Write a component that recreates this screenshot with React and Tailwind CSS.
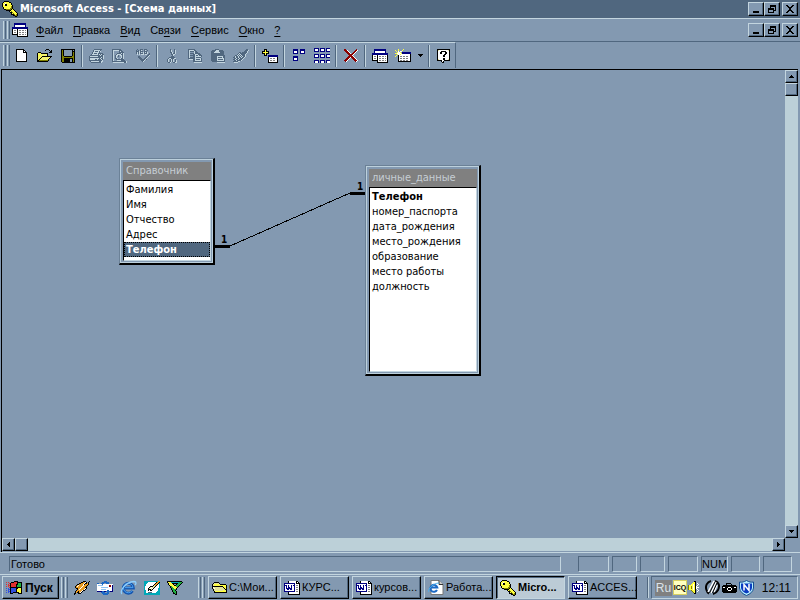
const INK = {
  k: '#000000', w: '#ffffff', n: '#000080', y: '#ffff40', o: '#808000', g: '#50677f',
  l: '#c3d5df', r: '#8b0000', s: '#808080', c: '#8399b1', b: '#1c69c4', a: '#e89b22',
  t: '#00a8b8', e: '#20b040', d: '#e4e49a', R: '#e03030', B: '#3050e0', p: '#8fc4f2',
};

/* Draws a bitmap icon from rows of characters, one character for each pixel. */
function Pixels({ rows }) {
  const width = Math.max(...rows.map((row) => row.length));
  const runs = [];
  rows.forEach((row, y) => {
    let x = 0;
    while (x < row.length) {
      let end = x + 1;
      while (end < row.length && row[end] === row[x]) end += 1;
      if (INK[row[x]]) runs.push({ x, y, w: end - x, fill: INK[row[x]] });
      x = end;
    }
  });
  return (
    <svg width={width} height={rows.length} shapeRendering="crispEdges" aria-hidden="true" className="shrink-0">
      {runs.map((r) => (
        <rect key={`${r.x}-${r.y}`} x={r.x} y={r.y} width={r.w} height="1" fill={r.fill} />
      ))}
    </svg>
  );
}

const ICONS = {
  key: [
    '..kkkkk.........',
    '.kyyyyykk.......',
    'kyywyyyyyk......',
    'kywkkyyyyk......',
    'kyykkyyyyyk.....',
    'kyyyyyyyyok.....',
    '.kyyyyyyyok.....',
    '.kyyyyyyook.....',
    '..kkoooookyk....',
    '....kkkkkyyyk...',
    '.......kyoyyyk..',
    '........kkoyyyk.',
    '.........kyoyyyk',
    '.........kkkoyok',
    '...........kkook',
    '.............kk.',
  ],
  windows: [
    '..nnnnnnnnnnnn..',
    '..nnnnnnnnnnnn..',
    '..nwwwwwwwwwwn..',
    '..nwwwwwwwwwwn..',
    'nnnnnnnnnnnnnnnn',
    'nnnnnnnnnnnnnnnn',
    'kwwwwkwwwwwwwwwk',
    'kwsswkwsswsswswk',
    'kwwwwkwwwwwwwwwk',
    'kwsswkwsswsswswk',
    'kwwwwkwwwwwwwwwk',
    'kkkkkkwsswsswswk',
    '.....kwwwwwwwwwk',
    '.....kkkkkkkkkkk',
  ],
  page: [
    'kkkkkkkk...',
    'kwwwwwwkk..',
    'kwwwwwwkwk.',
    'kwwwwwwkkkk',
    'kwwwwwwwwwk',
    'kwwwwwwwwwk',
    'kwwwwwwwwwk',
    'kwwwwwwwwwk',
    'kwwwwwwwwwk',
    'kwwwwwwwwwk',
    'kwwwwwwwwwk',
    'kwwwwwwwwwk',
    'kkkkkkkkkkk',
  ],
  open: [
    '.........kkk....',
    '........k...k.k.',
    '.............kk.',
    '.kkk........kkk.',
    'kydykkkkkkk.....',
    'kdyydydydyk.....',
    'kyydydydydk.....',
    'kdydykkkkkkkkkk.',
    'kydykdydydydyk..',
    'kdykydydydydk...',
    'kykydydydydk....',
    'kkoooooooook....',
    'kkkkkkkkkkk.....',
  ],
  save: [
    'kkkkkkkkkkkkkk',
    'kokcccccccckck',
    'kokcccccccckkk',
    'kokcccccccckok',
    'kokcccccccckok',
    'kokcccccccckok',
    'kokcccccccckok',
    'kookkkkkkkkook',
    'kooooooooooook',
    'kookkkkkkkkkok',
    'kookkkkkkcckok',
    'kookkkkkkcckok',
    'kookkkkkkcckok',
    '.kkkkkkkkkkkkk',
  ],
  print: [
    '.....gggggggg..',
    '....gllllllg...',
    '....glggglgl...',
    '...gllllllg....',
    '...glggglggggg.',
    '..gllllllglglgg',
    '.gggggggggglggl',
    'gllllllllgggggl',
    'gggggggggggglgl',
    'glllllllllglggl',
    'glllllgglggglg.',
    'gggggggggggggl.',
    '.gllllllllggll.',
    '..ggggggggggl..',
  ],
  preview: [
    'ggggggggg.....',
    'gllllllggg....',
    'gl.....glgg...',
    'gl.....ggggg..',
    'gl...gggglgl..',
    'gl..gllllggl..',
    'gl.gllg.llgl..',
    'gl.gl.g..lgl..',
    'gl.gl....lgl..',
    'gl.ggl..lggl..',
    'gl..gggggggg..',
    'gl...llllgggg.',
    'ggggggggggggggl',
    '.lllllllllllggl',
  ],
  spell: [
    '..g..ggg.ggg...',
    '.g.g.gl..gl.g..',
    '.ggglggg.ggg...',
    '.glglgl.lglgl..',
    '.glglggglgggl.g',
    '..l.l.lll.ll.gg',
    '............ggl',
    '...gg......ggl.',
    '...ggg....ggl..',
    '....ggg..ggl...',
    '.....ggggglg...',
    '......gggl.....',
    '.......gl......',
  ],
  cut: [
    '....g...g..',
    '....gl..gl.',
    '....gl..gl.',
    '....ggl.gl.',
    '.....glggl.',
    '.....ggll..',
    '......gl...',
    '.....ggg...',
    '...gggggg..',
    '..gllgggll.',
    '.gl.glgl.g.',
    '.gl.glgl.gl',
    '.gl.glgl.gl',
    '..ggl..ggll',
  ],
  copy: [
    'ggggggg.......',
    'glllllgg......',
    'glgggglgg.....',
    'gl....lggg....',
    'glgggglggggg..',
    'gl...gglllggg.',
    'glggggglgglggg',
    'gl...ggllllllg',
    'glggggglggggg.',
    'gggggggllllllg',
    '.llllgglgggglg',
    '.....ggllllllg',
    '.....ggggggggg',
    '......llllllll',
  ],
  paste: [
    '....gggg......',
    '.gggglllgggg..',
    'ggggllllggggg.',
    'gggllllllgggg.',
    'ggggggggggggg.',
    'ggggggggggggg.',
    'gggggggggggggg',
    'ggggggllllllgg',
    'gggggglgggglgg',
    'gggggglllllllg',
    'gggggglggggglg',
    'gggggglllllllg',
    '.ggggggggggggg',
    '......llllllll',
  ],
  brush: [
    '.............gg.',
    '............gggl',
    '...........gggl.',
    '......gg.gggggl.',
    '.....glggggggl..',
    '....glglggggl...',
    '..gglglglgggl...',
    '.glgglglglggl...',
    'gglgglgglggl....',
    '.gglgglgggl.....',
    'gglgglgggl......',
    '.gglggggl.......',
    'gggggll.........',
    '.llll...........',
  ],
  addTable: [
    '..kkk...........',
    '..kyk...........',
    'kkkykkk.........',
    'kyyyyyk.........',
    'kkkykkk.........',
    '..kyk...........',
    '..kkk.nnnnnnnnnn',
    '......nnnnnnnnnn',
    '......kwwwwwwwwk',
    '......kwsswsswwk',
    '......kwwwwwwwwk',
    '......kwsswsswwk',
    '......kwwwwwwwwk',
    '......kkkkkkkkkk',
  ],
  direct: [
    'nnnnn..nnnnn',
    'nnnnn..nnnnn',
    'nwwwn..nwwwn',
    'nwwwn..nwwwn',
    'nnnnn..nnnnn',
    '............',
    '............',
    'nnnnn.......',
    'nnnnn.......',
    'nwwwn.......',
    'nwwwn.......',
    'nnnnn.......',
    '............',
    '............',
  ],
  all: [
    'nnnnn.nnnnn.nnnn',
    'nwwwn.nwwwn.nwww',
    'nwwwn.nwwwn.nwww',
    'nnnnn.nnnnn.nnnn',
    '................',
    '................',
    'nnnnn.nnnnn.nnnn',
    'nwwwn.nwwwn.nwww',
    'nwwwn.nwwwn.nwww',
    'nnnnn.nnnnn.nnnn',
    '................',
    '................',
    'nnnnn.nnnnn.nnnn',
    'nwwwn.nwwwn.nwww',
    'nwwwn.nwwwn.nwww',
  ],
  remove: [
    'rr..........r.',
    'rrrw.......rrw',
    '.rrrw.....rrw.',
    '..rrrw...rrw..',
    '...rrrw.rrw...',
    '....rrrrrw....',
    '.....rrrw.....',
    '....rrrrrw....',
    '...rrrwrrrw...',
    '..rrrw..rrrw..',
    '.rrrw....rrrw.',
    'rrrw......rrrw',
    '.rw........rw.',
  ],
  newObject: [
    '...y....y.......',
    'y..y...y........',
    '.y.w.ww.........',
    '..ywwy.nnnnnnnnn',
    'yywwwwynnnnnnnnn',
    '..ywwywwwwwwwwwk',
    '.y.kwwwwwwwwwwwk',
    'y..kwsswsswsswwk',
    '...kwwwwwwwwwwwk',
    '...kwsswsswsswwk',
    '...kwwwwwwwwwwwk',
    '...kwsswsswsswwk',
    '...kkkkkkkkkkkkk',
  ],
  help: [
    'kkkkkkkkkkkkk',
    'kdwwwwwwwwwdk',
    'kwwwkkkkkwwwk',
    'kwwkkwwwkkwwk',
    'kwwkkwwwkkwwk',
    'kwwwwwwkkwwwk',
    'kwwwwwkkwwwwk',
    'kwwwwwkkwwwwk',
    'kwwwwwwwwwwwk',
    'kwwwwwkkwwwwk',
    'kdwwwwkkwwwdk',
    'kkkkkwwkkkkkk',
    '....kwk......',
    '.....kk......',
  ],
  min: ['........', '........', '........', '........', '........', '........', '.kkkkkk.', '.kkkkkk.'],
  restore: ['..kkkkkk', '..kkkkkk', '..k....k', 'kkkkkk.k', 'kkkkkk.k', 'k....kkk', 'k....k..', 'kkkkkk..'],
  close: ['kk....kk', '.kk..kk.', '..kkkk..', '...kk...', '...kk...', '..kkkk..', '.kk..kk.', 'kk....kk'],
  up: ['..k..', '.kkk.', 'kkkkk'],
  down: ['kkkkk', '.kkk.', '..k..'],
  left: ['..k', '.kk', 'kkk', '.kk', '..k'],
  right: ['k..', 'kk.', 'kkk', 'kk.', 'k..'],
  start: [
    '........kkkk....',
    'R.R..kkkRRRkkkkk',
    '...RkRRRRRRkeeek',
    'R.R.kRRRRRkkeeek',
    '..RRkRRRRRkeeeek',
    'R.R.kRRRRRkeeeek',
    '...Rkkkkkkkkkkkk',
    'B.B.kBBBBBkkyyyk',
    '..BBkBBBBBkyyyyk',
    'B.B.kBBBBBkyyyyk',
    '..BBkBBBBBkyyyyk',
    'B.B.kBBkkkkkkyyk',
    '....kkk.....kkkk',
  ],
  folder: [
    '..kkkkk........',
    '.kdddddk.......',
    'kdyyyyydkkkkkk.',
    'kdyyyyyyyyyyyyk',
    'kkkkkkkkkkkyyyk',
    'kwdddddddddkyyk',
    'kdwdddddddddkyk',
    '.kdddddddddddkk',
    '.kdddddddddyydk',
    '..kyyyyyyyyyyyk',
    '..kkkkkkkkkkkkk',
  ],
  word: [
    '....kwwwwwwwkk..',
    '....kwwwwwwwkwk.',
    'nnnnnnnnnnnwkkkk',
    'nwwwwwwwwwnwwwwk',
    'nnnwnwwnwnnwsswk',
    'nwnwnwwnwwnwwwwk',
    'nwnwnnwnwwnwsswk',
    'nwnnnnnnwwnwwwwk',
    'nwwnnwnnwwnwsswk',
    'nwwwwwwwwwnwwwwk',
    'nnnnnnnnnnnwsswk',
    '....kwwwwwwwwwwk',
    '....kwwwwwwwwwwk',
    '....kkkkkkkkkkkk',
  ],
  winamp: [
    '.........kkk...k',
    '.......kkaawk.k.',
    '.....kkaaawkkak.',
    '...kkaaaawkaaak.',
    '..kawaaaawaaak..',
    '.kawaaaawaaak...',
    '.kaaaaawaaakk...',
    '..kkaawaaaawk...',
    '...kawaaaawk....',
    '..kaaaaawkk.....',
    '.kaakaawk.......',
    '.kakkawk........',
    'kk..kkk.........',
    'k...............',
  ],
  mail: [
    '.......bbb......',
    '.....bbbbbbb....',
    'bb..bbb..bbb....',
    'wwwwwbwwwwwwwwww',
    'wpppppwwwwwwrrwn',
    'wwwwwwwwwwwwrrwn',
    'wwwwpppppppwwwwn',
    'wwwwwwwwwwwwwwwn',
    'wwwwpppppwwwwwwn',
    'wwwwwwwwwwbbwwwn',
    'nnnnnbbnnbbbbnnn',
    '....bbbb..bb....',
    '.....bbbbbbb....',
    '......bbbbb.....',
  ],
  pen: [
    'ttttttttttttttaa',
    'ttttwwwwwwwwkaak',
    'tttwwwwwwwwkaakt',
    'ttwwwwwwwwkaakwt',
    'ttwwwwwwwkdakwwt',
    'twwwwwkkkddkwwwt',
    'twwwwkdwddkwwwwt',
    'twwwkdwdwkwwwwtt',
    'twwwkkkdkwwwwwtt',
    'ttwwkwkkwwwwwwtt',
    'ttwwwwwwwwwwwttt',
    'ttwwggggwwwwtttt',
    'tttttttttttttttt',
    'tttttttttttttttt',
  ],
  funnel: [
    'kkkkkkkkkkkkkkk.',
    'kyyytttttttteeek',
    '.kyyykkkkkkeeek.',
    '.kyyyyk..keeek..',
    '..kyyyykkeeek...',
    '...keyyyyeek....',
    '...keeyyyyk.....',
    '....keeyyk......',
    '....keeeek......',
    '.....keek.......',
    '.....keeek......',
    '......keek......',
    '......kkek......',
    '........kk......',
  ],
  speaker: [
    '......kk...',
    '.....yyk...',
    '....yyyk.w.',
    '...yywyk..w',
    'oyyyywyk.w.',
    'oyyoywykw..',
    'oyyoywykwww',
    'oyyoywykw..',
    'oyyyywyk.w.',
    '...oyyyk..w',
    '....oyyk.w.',
    '.....oyk...',
    '......kk...',
  ],
  camera: [
    '....kkkkk......',
    '....kcccck.....',
    '.kkkkkkkkkkkkk.',
    'kkkkkkkkkkkkkkk',
    'kwwkkkwwwkkkwwk',
    'kkkkkwkkkwkkkkk',
    'kkkkkwkkkwkkkkk',
    'kkkkkkwwwkkkkkk',
    'kkkkkkkkkkkkkkk',
    '.kkkkkkkkkkkkk.',
  ],
};

const RAISED = 'border border-t-[#c3d5df] border-l-[#c3d5df] border-r-black border-b-black shadow-[inset_-1px_-1px_0_#50677f]';
const SUNKEN = 'border border-t-[#50677f] border-l-[#50677f] border-r-[#c3d5df] border-b-[#c3d5df]';

function Browser() {
  return (
    <svg width="17" height="16" viewBox="0 0 17 16" aria-hidden="true" className="shrink-0">
      <path d="M12.5 11A5 5 0 1 1 13.3 8H5" fill="none" stroke="#1556b0" strokeWidth="3" />
      <path d="M12.2 10.6A4.8 4.8 0 1 1 13 7.6H5" fill="none" stroke="#4aa0ee" strokeWidth="1" />
      <path d="M2 14C-1 12 5 2 14 1.500C17 1.500 16 4 15 5" fill="none" stroke="#8fd0ff" strokeWidth="1.300" />
    </svg>
  );
}

function BrowserPage() {
  return (
    <svg width="16" height="15" viewBox="0 0 16 15" aria-hidden="true" className="shrink-0">
      <path d="M3 .5h8l4 4v10H3z" fill="#fff" stroke="#777" />
      <path d="M11 .5v4h4" fill="#ccc" stroke="#333" />
      <path d="M9 10A3.500 3.500 0 1 1 9.300 7.500H3" fill="none" stroke="#1c69c4" strokeWidth="2" />
      <path d="M1 12C-1 10 5 3 11 3" fill="none" stroke="#4ab0ee" />
    </svg>
  );
}

function Shutter() {
  return (
    <svg width="15" height="15" viewBox="0 0 15 15" aria-hidden="true" className="shrink-0">
      <path d="M6 1C2 2 0 6 1.500 10C2 12 3 13 4 13.500M10 1C14 2 15 6 13 10C12 12 10 13.500 8 14" fill="none" stroke="#000" strokeWidth="2" />
      <path d="M3 12L9 1M6 13l5-11M9 12l3-7" stroke="#fff" strokeWidth="1.500" />
      <path d="M4.500 13l5.500-11M7.500 13L12 3" stroke="#000" />
    </svg>
  );
}

function Shield() {
  return (
    <svg width="15" height="16" viewBox="0 0 15 16" aria-hidden="true" className="shrink-0">
      <path d="M.5 2C3 2.500 5 2 7.500.5C10 2 12 2.500 14.500 2V8C14 12 11 14 7.500 15.500C4 14 1 12 .5 8z" fill="#b8f0ff" stroke="#174f91" />
      <path d="M2 3.500h11V8c-.5 3-3 4.500-5.500 5.500c-2.500-1-5-2.500-5.500-5.500z" fill="#0a3cc0" />
      <path d="M5 10.500V4.500l5 6V4" fill="none" stroke="#fff" strokeWidth="1.500" />
    </svg>
  );
}

function WindowButtons() {
  return (
    <div className="flex">
      {[['min', 'Свернуть'], ['restore', 'Восстановить'], ['close', 'Закрыть']].map(([icon, label]) => (
        <button
          key={icon}
          type="button"
          aria-label={label}
          className={`flex h-[14px] w-4 items-center justify-center bg-[#8399b1] last:ml-[2px] ${RAISED}`}
        >
          <Pixels rows={ICONS[icon]} />
        </button>
      ))}
    </div>
  );
}

function Grip() {
  return (
    <div className="flex shrink-0 gap-px self-stretch py-[2px]">
      <div className="w-[3px] border-l border-r border-l-[#c3d5df] border-r-[#50677f]" />
      <div className="w-[3px] border-l border-r border-l-[#c3d5df] border-r-[#50677f]" />
    </div>
  );
}

const MENUS = ['Файл', 'Правка', 'Вид', 'Связи', 'Сервис', 'Окно', '?'];

function MenuItem({ text }) {
  const mark = text === 'Связи' ? 2 : 0;
  return (
    <button type="button" className="leading-4">
      {text.slice(0, mark)}
      <span className="underline underline-offset-2">{text[mark]}</span>
      {text.slice(mark + 1)}
    </button>
  );
}

const TOOLS = [
  [['page', 'Создать'], ['open', 'Открыть'], ['save', 'Сохранить']],
  [['print', 'Печать'], ['preview', 'Просмотр'], ['spell', 'Орфография']],
  [['cut', 'Вырезать'], ['copy', 'Копировать'], ['paste', 'Вставить'], ['brush', 'Формат по образцу']],
  [['addTable', 'Добавить таблицу']],
  [['direct', 'Прямые связи'], ['all', 'Все связи']],
  [['remove', 'Удалить']],
  [['windows', 'Окно базы данных'], ['newObject', 'Новый объект']],
  [['help', 'Справка']],
];

function Toolbar() {
  return (
    <div className="flex h-[26px] w-fit items-center border-r border-t border-r-[#50677f] border-t-[#c3d5df] pl-[3px]">
      <Grip />
      {TOOLS.map((group, i) => (
        <div key={group[0][0]} className="flex h-full items-center">
          {i > 0 && <div className="mx-[2px] h-[22px] w-[2px] border-l border-r border-l-[#50677f] border-r-[#c3d5df]" />}
          {group.map(([icon, label]) => (
            <button key={icon} type="button" aria-label={label} className="flex h-6 w-[23px] items-center justify-center">
              <Pixels rows={ICONS[icon]} />
            </button>
          ))}
          {group.length === 2 && group[1][0] === 'newObject' && (
            <button type="button" aria-label="Другие объекты" className="flex h-6 w-3 items-center justify-center">
              <Pixels rows={ICONS.down} />
            </button>
          )}
        </div>
      ))}
    </div>
  );
}

function ScrollBox({ icon, label }) {
  return (
    <button type="button" aria-label={label} className={`flex size-[13px] shrink-0 items-center justify-center bg-[#8399b1] ${RAISED}`}>
      {icon && <Pixels rows={ICONS[icon]} />}
    </button>
  );
}

function TableNode({ title, fields, keyField, selected, place }) {
  return (
    <section
      className={`absolute flex flex-col border border-b-2 border-r-2 border-b-black border-l-[#6b8197] border-r-black border-t-[#6b8197] bg-[#8399b1] ${place}`}
    >
      <div className="flex flex-1 flex-col border border-[#bcd0dc] p-px pl-[2px] pt-[2px]">
        <h2 className="h-[18px] bg-[#808080] pl-[3px] leading-[18px] text-[#c6ced4]">{title}</h2>
        <ul className="flex-1 border border-b-[#c3d5df] border-l-black border-r-[#c3d5df] border-t-black bg-white pt-px">
          {fields.map((field) => (
            <li
              key={field}
              className={`h-[15px] whitespace-nowrap pl-[2px] leading-[15px] ${field === keyField ? 'font-bold' : ''} ${
                field === selected ? 'bg-[#50677f] text-white outline-1 -outline-offset-1 outline-dotted outline-black' : ''
              }`}
            >
              {field}
            </li>
          ))}
        </ul>
      </div>
    </section>
  );
}

function Canvas() {
  return (
    <main className='relative min-w-0 flex-1 overflow-hidden font-["DejaVu_Sans_Condensed","DejaVu_Sans",sans-serif] text-[11px]'>
      <svg className="absolute left-0 top-0" width="500" height="320" aria-hidden="true">
        <path d="M228 176L348 123" stroke="#000" shapeRendering="crispEdges" />
        <path d="M213 176h15M348 123h15" stroke="#000" strokeWidth="3" shapeRendering="crispEdges" />
      </svg>
      <span className="absolute left-[219px] top-[164px] text-[10px] font-bold leading-3">1</span>
      <span className="absolute left-[355px] top-[111px] text-[10px] font-bold leading-3">1</span>
      <TableNode
        title="Справочник"
        fields={['Фамилия', 'Имя', 'Отчество', 'Адрес', 'Телефон']}
        keyField="Телефон"
        selected="Телефон"
        place="left-[117px] top-[88px] h-[107px] w-[96px]"
      />
      <TableNode
        title="личные_данные"
        fields={['Телефон', 'номер_паспорта', 'дата_рождения', 'место_рождения', 'образование', 'место работы', 'должность']}
        keyField="Телефон"
        place="left-[363px] top-[95px] h-[211px] w-[116px]"
      />
    </main>
  );
}

function StatusBar() {
  return (
    <footer className="flex h-[22px] shrink-0 items-center border-t border-t-[#c3d5df] pl-[9px] pr-2">
      <div className={`mr-[17px] h-4 flex-1 pl-px leading-[14px] ${SUNKEN}`}>Готово</div>
      <div className="flex gap-[3px]">
        <div className={`h-4 w-[31px] ${SUNKEN}`} />
        <div className={`h-4 w-[25px] ${SUNKEN}`} />
        <div className={`h-4 w-[25px] ${SUNKEN}`} />
        <div className={`h-4 w-[30px] ${SUNKEN}`} />
        <div className={`h-4 w-[27px] text-center leading-[14px] ${SUNKEN}`}>NUM</div>
        <div className={`h-4 w-[29px] ${SUNKEN}`} />
        <div className={`h-4 w-[29px] ${SUNKEN}`} />
      </div>
    </footer>
  );
}

const TASKS = [
  ['folder', 'C:\\Мои...'],
  ['word', 'КУРС...'],
  ['word', 'курсов...'],
  ['browser', 'Работа...'],
  ['key', 'Micro...'],
  ['word', 'ACCES...'],
];

function Taskbar() {
  return (
    <nav className="flex h-[26px] shrink-0 items-center border-t border-t-[#c3d5df] pl-[2px] pr-[2px] text-[12px]">
      <button type="button" className={`flex h-[23px] w-[57px] shrink-0 items-center gap-[3px] pl-[3px] font-bold ${RAISED}`}>
        <Pixels rows={ICONS.start} />
        Пуск
      </button>
      <div className="ml-[2px] flex self-stretch">
        <Grip />
      </div>
      <div className="ml-[6px] flex w-[124px] shrink-0 items-center gap-[7px]">
        <button type="button" aria-label="Winamp"><Pixels rows={ICONS.winamp} /></button>
        <button type="button" aria-label="Outlook Express"><Pixels rows={ICONS.mail} /></button>
        <button type="button" aria-label="Internet Explorer"><Browser /></button>
        <button type="button" aria-label="Рабочий стол"><Pixels rows={ICONS.pen} /></button>
        <button type="button" aria-label="Каналы"><Pixels rows={ICONS.funnel} /></button>
      </div>
      <div className="flex self-stretch">
        <Grip />
      </div>
      <div className="ml-[3px] flex min-w-0 flex-1 gap-[3px] text-[11px]">
        {TASKS.map(([icon, text]) => (
          <button
            key={text}
            type="button"
            className={`flex h-[23px] w-[69px] min-w-0 items-center gap-[2px] overflow-hidden whitespace-nowrap pl-[3px] ${
              icon === 'key'
                ? 'border border-b-[#c3d5df] border-l-black border-r-[#c3d5df] border-t-black bg-[#bccbd6] font-bold shadow-[inset_1px_1px_0_#50677f]'
                : RAISED
            }`}
          >
            {icon === 'browser' ? <BrowserPage /> : <Pixels rows={ICONS[icon]} />}
            {text}
          </button>
        ))}
      </div>
      <div className="flex self-stretch py-[2px]">
        <div className="mr-[2px] w-[2px] border-l border-r border-l-[#50677f] border-r-[#c3d5df]" />
      </div>
      <div className={`flex h-[23px] w-[147px] shrink-0 items-center pl-[3px] ${SUNKEN}`}>
        <span className="w-[17px] bg-[#808080] text-center leading-4 text-[#dce4ea]">Ru</span>
        <span className="ml-px flex h-[15px] w-[14px] items-center justify-center border border-[#d8d060] bg-[#ffffc0] text-[7px] font-bold leading-3">
          ICQ
        </span>
        <span className="ml-px"><Pixels rows={ICONS.speaker} /></span>
        <span className="ml-[6px] flex items-center gap-[2px]">
          <Shutter />
          <Pixels rows={ICONS.camera} />
          <Shield />
        </span>
        <time className="ml-auto mr-[6px]">12:11</time>
      </div>
    </nav>
  );
}

export default function App() {
  return (
    <div className='flex h-screen flex-col overflow-hidden bg-[#8399b1] font-["Liberation_Sans",Arial,sans-serif] text-[11px] text-black'>
      <header className="flex h-[18px] shrink-0 items-center bg-[#50677f] pl-[2px] pr-[2px]">
        <Pixels rows={ICONS.key} />
        <h1 className='ml-[2px] flex-1 font-["DejaVu_Sans_Condensed","DejaVu_Sans",sans-serif] font-bold leading-[18px] text-white'>
          Microsoft Access - [Схема данных]
        </h1>
        <WindowButtons />
      </header>
      <div className="flex h-6 shrink-0 items-center border-b border-t border-b-[#50677f] border-t-[#c3d5df] pl-[3px] pr-[2px]">
        <Grip />
        <div className="ml-[2px]"><Pixels rows={ICONS.windows} /></div>
        <div className="ml-2 flex flex-1 gap-[10px]">
          {MENUS.map((menu) => <MenuItem key={menu} text={menu} />)}
        </div>
        <WindowButtons />
      </div>
      <Toolbar />
      <div className="ml-px mr-[2px] mt-px flex min-h-0 flex-1 flex-col border-l border-t border-black">
        <div className="flex min-h-0 flex-1">
          <Canvas />
          <div className="flex w-[13px] shrink-0 flex-col bg-[#bcd0d8]">
            <ScrollBox icon="up" label="Вверх" />
            <ScrollBox label="Ползунок" />
            <div className="flex-1" />
            <ScrollBox icon="down" label="Вниз" />
          </div>
        </div>
        <div className="mr-[13px] flex h-[13px] shrink-0 bg-[#bcd0d8]">
          <ScrollBox icon="left" label="Влево" />
          <ScrollBox label="Ползунок" />
          <div className="flex-1" />
          <ScrollBox icon="right" label="Вправо" />
        </div>
        <div className="h-px shrink-0" />
      </div>
      <StatusBar />
      <Taskbar />
    </div>
  );
}
